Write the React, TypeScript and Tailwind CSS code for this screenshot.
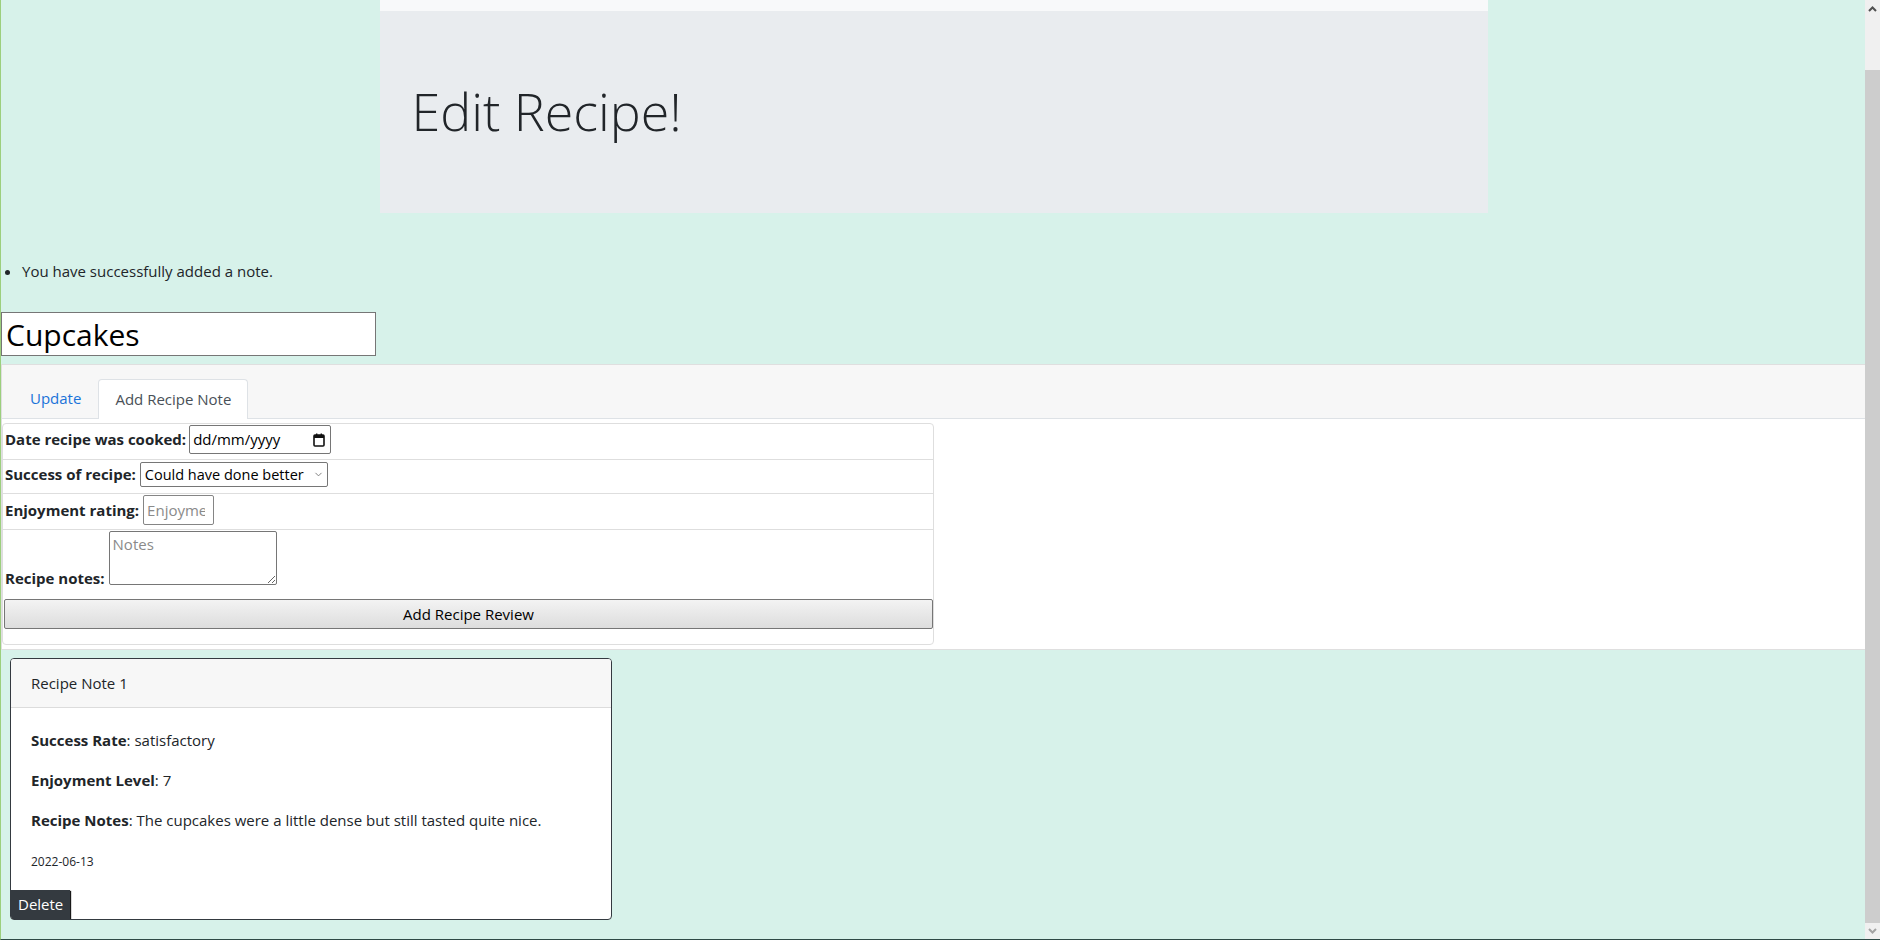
import { ChevronDown } from "lucide-react";

const font = "font-['Open_Sans',sans-serif]";

function CalendarGlyph() {
  return (
    <svg width="12" height="14" viewBox="0 0 12 14" className="shrink-0">
      <rect x="1" y="2" width="10" height="11" fill="none" stroke="#111" strokeWidth="1.6" rx="1" />
      <rect x="1" y="2" width="10" height="3" fill="#111" />
      <rect x="3" y="0.5" width="1.4" height="2" fill="#111" />
      <rect x="7.6" y="0.5" width="1.4" height="2" fill="#111" />
    </svg>
  );
}

function Scrollbar() {
  return (
    <div className="w-[15px] shrink-0 flex flex-col bg-[#f0f0f0]">
      <div className="h-[17px] flex items-center justify-center">
        <svg width="9" height="6" viewBox="0 0 9 6">
          <polyline points="1,5 4.5,1.5 8,5" fill="none" stroke="#505050" strokeWidth="2" />
        </svg>
      </div>
      <div className="h-[53px]" />
      <div className="flex-1 bg-[#cdcdcd]" />
      <div className="h-[16px] flex items-center justify-center">
        <svg width="9" height="6" viewBox="0 0 9 6">
          <polyline points="1,1 4.5,4.5 8,1" fill="none" stroke="#a3a3a3" strokeWidth="2" />
        </svg>
      </div>
    </div>
  );
}

function NoteForm() {
  return (
    <div className="w-[932px] rounded-[4px] border border-[#dedede] bg-white text-[15px] text-[#212529]">
      <div className="h-[36px] flex items-center px-[2px] pb-[4px] border-b border-[#dedede]">
        <span className="font-bold">Date recipe was cooked:</span>
        <div className="ml-[3px] w-[142px] h-[29px] border border-[#767676] rounded-[2px] flex items-center justify-between pl-[3px] pr-[5px] text-[15px] text-black">
          <span>dd/mm/yyyy</span>
          <CalendarGlyph />
        </div>
      </div>
      <div className="h-[34px] flex items-center px-[2px] pb-[4px] border-b border-[#dedede]">
        <span className="font-bold">Success of recipe:</span>
        <div className="ml-[4px] w-[188px] h-[25px] border border-[#767676] rounded-[2px] flex items-center justify-between pl-[4px] pr-[3px] text-[14.5px] text-black">
          <span>Could have done better</span>
          <ChevronDown size={11} strokeWidth={2} className="text-[#777]" />
        </div>
      </div>
      <div className="h-[36px] flex items-center px-[2px] pb-[3px] border-b border-[#dedede]">
        <span className="font-bold">Enjoyment rating:</span>
        <input
          placeholder="Enjoyment rating"
          className="ml-[4px] w-[71px] h-[30px] border border-[#858585] rounded-[2px] pl-[3px] pr-[8px] text-[15px] placeholder:text-[#8a8a8a] outline-none"
        />
      </div>
      <div className="flex items-end px-[2px] pt-px">
        <span className="font-bold leading-6 relative top-[5px]">Recipe notes:</span>
        <textarea
          placeholder="Notes"
          className="ml-[4px] w-[168px] h-[54px] min-w-[168px] border border-[#767676] rounded-[2px] px-[3px] py-[2px] text-[15px] leading-5 placeholder:text-[#8a8a8a] outline-none resize-y"
        />
      </div>
      <button className="mt-[14px] mb-[15px] ml-px w-[929px] h-[30px] border border-[#767676] rounded-[2px] bg-gradient-to-b from-[#f3f3f3] to-[#dddddd] text-[15px] text-black">
        Add Recipe Review
      </button>
    </div>
  );
}

export default function App() {
  return (
    <div className={`${font} h-[940px] w-full flex overflow-hidden bg-[#d7f2ea] border-l border-l-[#9ccf7d] border-b border-b-[#2f4a46] text-[#212529]`}>
      <main className="flex-1 min-w-0 flex flex-col">
        <div className="flex justify-center">
          <div className="w-[1108px] ml-[1px]">
            <div className="h-[11px] bg-[#f8f9fa]" />
            <div className="h-[202px] bg-[#e9ecef] px-8 pt-[66px]">
              <h1 className="text-[52px] font-light leading-[67px] text-[#212529]">Edit Recipe!</h1>
            </div>
          </div>
        </div>

        <ul className="mt-[46px] pl-[21px] list-disc text-[15px] leading-6">
          <li>You have successfully added a note.</li>
        </ul>

        <input
          defaultValue="Cupcakes"
          className="mt-[29px] w-[375px] h-[44px] border border-[#767676] bg-white px-[4px] text-[30px] text-black outline-none"
        />

        <section className="mt-[8px] border border-[#dfdfdf] border-r-0 bg-white">
          <div className="bg-[#f7f7f7] pt-[14px] pl-[12px] border-b border-[#dee2e6] flex">
            <a className="px-4 h-[39px] flex items-center text-[15px] text-[#1a73d9]" href="#">Update</a>
            <div className="ml-[1px] -mb-px h-[40px] px-4 flex items-center border border-b-0 border-[#dee2e6] rounded-t-[4px] bg-white text-[15px] text-[#495057]">
              Add Recipe Note
            </div>
          </div>
          <div className="pt-[4px] pb-[4px]">
            <NoteForm />
          </div>
        </section>

        <div className="mt-[8px] ml-[9px] w-[602px] rounded-[4px] border border-[#343a40] bg-white overflow-hidden text-[15px]">
          <div className="h-[49px] bg-[#f7f7f7] border-b border-[#dcdcdc] px-5 flex items-center">
            Recipe Note 1
          </div>
          <div className="px-5 pt-5 leading-6">
            <p className="mb-4"><b>Success Rate</b>: satisfactory</p>
            <p className="mb-4"><b>Enjoyment Level</b>: 7</p>
            <p className="mb-4"><b>Recipe Notes</b>: The cupcakes were a little dense but still tasted quite nice.</p>
            <p className="mb-4"><small className="text-[12px]">2022-06-13</small></p>
          </div>
          <button className="h-[29px] px-[7px] bg-[#343a40] text-white text-[15px] shadow-[1px_1px_1px_rgba(0,0,0,0.9)]">
            Delete
          </button>
        </div>
      </main>
      <Scrollbar />
    </div>
  );
}
